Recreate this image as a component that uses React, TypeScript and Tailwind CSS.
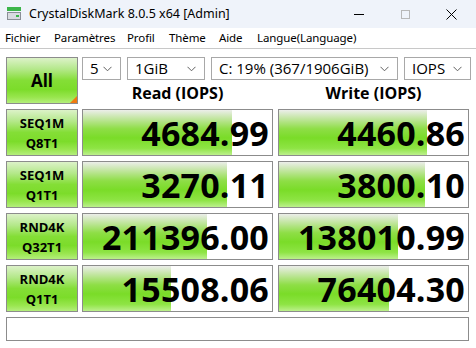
import React from "react";

const rows = [
  { l1: "SEQ1M", l2: "Q8T1", r: "4684.99", rw: 149, w: "4460.86", ww: 148 },
  { l1: "SEQ1M", l2: "Q1T1", r: "3270.11", rw: 144, w: "3800.10", ww: 146 },
  { l1: "RND4K", l2: "Q32T1", r: "211396.00", rw: 124, w: "138010.99", ww: 119 },
  { l1: "RND4K", l2: "Q1T1", r: "15508.06", rw: 88, w: "76404.30", ww: 110 },
];

const btnBg =
  "bg-[linear-gradient(to_bottom,#dcf2c8_0%,#b4e88a_25%,#84de36_50%,#7cdc2a_70%,#9ae650_88%,#b4ee7c_100%)]";
const barBg =
  "bg-[linear-gradient(to_bottom,#eceeea_0%,#c4e6a4_18%,#8ede46_42%,#7adc28_62%,#8ee444_85%,#bcf08c_100%)]";

function Chevron() {
  return (
    <svg width="9" height="6" viewBox="0 0 9 6" className="shrink-0">
      <path d="M0.5 0.8 L4.5 4.8 L8.5 0.8" fill="none" stroke="#606060" strokeWidth="1" />
    </svg>
  );
}

function Select({ w, text }: { w: string; text: string }) {
  return (
    <div className={`${w} h-[23px] border border-[#a8a8a8] bg-white flex items-center justify-between pl-[7px] pr-[8px] text-[15px] leading-none text-black`}>
      <span className="whitespace-nowrap">{text}</span>
      <Chevron />
    </div>
  );
}

function Value({ text, fill }: { text: string; fill: number }) {
  return (
    <div className="relative w-[191px] h-[47px] border border-[#8c8c8c] bg-white overflow-hidden">
      <div className={`absolute left-0 top-0 bottom-0 ${barBg}`} style={{ width: fill }} />
      <div className="relative h-full flex items-center justify-end pr-[3px] text-[34px] font-bold leading-none text-black tracking-[0.2px]">
        {text}
      </div>
    </div>
  );
}

export default function App() {
  return (
    <div
      className="w-[476px] h-[348px] bg-white overflow-hidden flex flex-col"
      style={{ fontFamily: '"Open Sans", "Noto Sans", sans-serif' }}
    >
      {/* Title bar */}
      <div className="h-[28px] bg-[#eff3fa] flex items-center relative">
        <svg width="16" height="14" viewBox="0 0 16 14" className="ml-[6px]">
          <rect x="1" y="0" width="14" height="4" fill="#3cb54a" />
          <rect x="1" y="5" width="14" height="8" fill="#8a8f96" />
          <rect x="2" y="6" width="12" height="6" fill="#d8dbe0" />
          <rect x="10" y="8" width="3" height="2" fill="#3cb54a" />
        </svg>
        <span className="ml-[7px] text-[12.5px] text-black whitespace-nowrap" style={{ fontFamily: '"Noto Sans", sans-serif' }}>
          CrystalDiskMark 8.0.5 x64 [Admin]
        </span>
        <div className="ml-auto flex items-center h-full pr-[2px]">
          <div className="w-[46px] h-full flex items-center justify-center">
            <div className="w-[10px] h-[1px] bg-black" />
          </div>
          <div className="w-[46px] h-full flex items-center justify-center">
            <div className="w-[9px] h-[9px] border border-[#b8b8b8]" />
          </div>
          <div className="w-[46px] h-full flex items-center justify-center">
            <svg width="11" height="11" viewBox="0 0 11 11">
              <path d="M0.5 0.5 L10.5 10.5 M10.5 0.5 L0.5 10.5" stroke="#000" strokeWidth="1" />
            </svg>
          </div>
        </div>
      </div>
      {/* Menu bar */}
      <div
        className="h-[21px] bg-white border-b border-[#c8c8c8] flex items-center text-[11.5px] tracking-[-0.1px] text-black whitespace-nowrap pl-[5px]"
        style={{ fontFamily: '"Noto Sans", sans-serif' }}
      >
        <span className="w-[49px]">Fichier</span>
        <span className="w-[73px]">Paramètres</span>
        <span className="w-[42px]">Profil</span>
        <span className="w-[50px]">Thème</span>
        <span className="w-[38px]">Aide</span>
        <span>Langue(Language)</span>
      </div>
      {/* Content */}
      <div className="flex flex-col gap-[5px] pt-[8px] pl-[6px]">
        <div className="flex h-[47px]">
          <div className={`relative w-[72px] h-[47px] border border-[#8c8c8c] ${btnBg} flex items-center justify-center text-[17px] font-bold text-black overflow-hidden`}>
            All
            <div className="absolute right-0 bottom-0 w-0 h-0 border-l-[7px] border-l-transparent border-b-[7px] border-b-[#f07a10]" />
          </div>
          <div className="ml-[4px] flex flex-col">
            <div className="flex gap-[6px]">
              <Select w="w-[39px]" text="5" />
              <Select w="w-[78px]" text="1GiB" />
              <Select w="w-[187px]" text="C: 19% (367/1906GiB)" />
              <Select w="w-[67px]" text="IOPS" />
            </div>
            <div className="flex mt-[2px] text-[16px] font-bold text-black leading-[22px]">
              <div className="w-[191px] text-center">Read (IOPS)</div>
              <div className="ml-[5px] w-[191px] text-center">Write (IOPS)</div>
            </div>
          </div>
        </div>
        {rows.map((r, i) => (
          <div key={i} className="flex h-[47px]">
            <div className={`w-[72px] h-[47px] border border-[#8c8c8c] ${btnBg} flex flex-col items-center justify-center text-[13px] font-bold text-black leading-[20px]`}>
              <span>{r.l1}</span>
              <span>{r.l2}</span>
            </div>
            <div className="ml-[4px]">
              <Value text={r.r} fill={r.rw} />
            </div>
            <div className="ml-[5px]">
              <Value text={r.w} fill={r.ww} />
            </div>
          </div>
        ))}
        <div className="w-[463px] h-[24px] border border-[#8c8c8c] bg-white" />
      </div>
    </div>
  );
}
